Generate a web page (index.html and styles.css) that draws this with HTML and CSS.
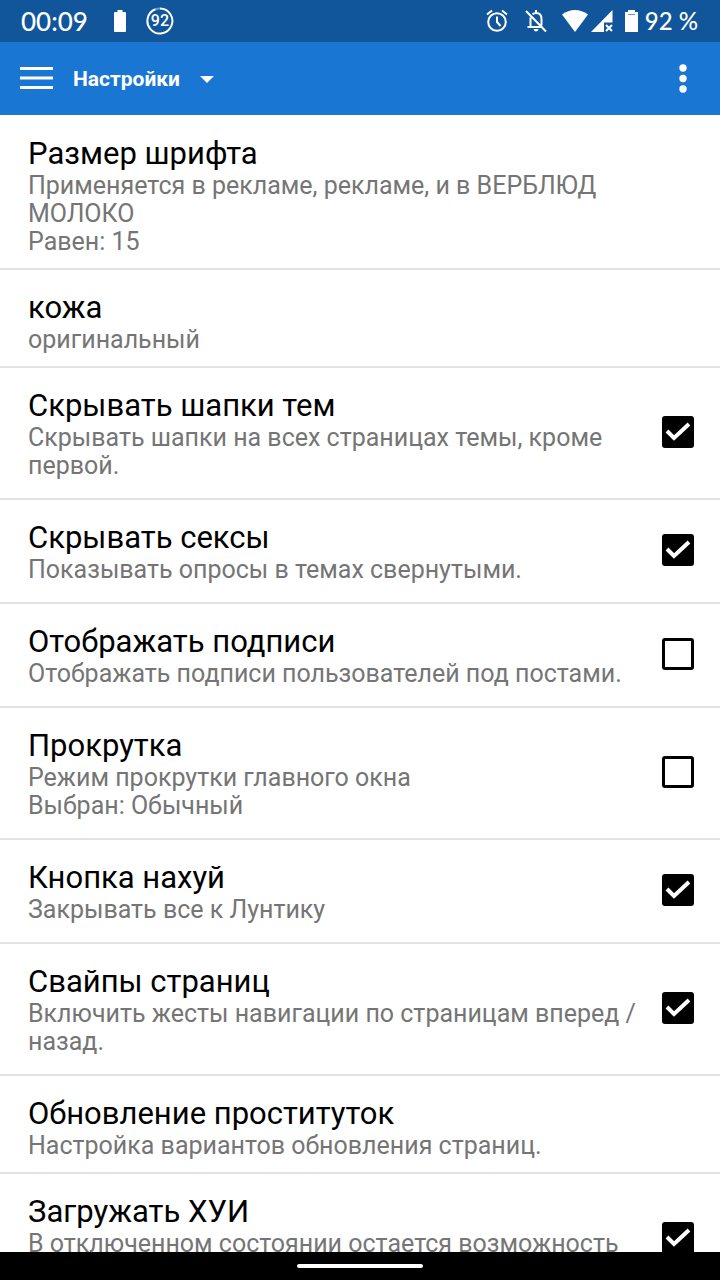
FILE: index.html
```html
<!DOCTYPE html>
<html lang="ru">
<head>
<meta charset="utf-8">
<meta name="viewport" content="width=device-width, initial-scale=1">
<title>Настройки</title>
<link rel="stylesheet" href="styles.css">
</head>
<body>
<div class="screen">
  <div class="status">
    <span class="status-time">00:09</span>
    <svg class="status-battery-note" width="12" height="22" viewBox="0 0 12 22" fill="currentColor"><path d="M3.500 0h5v2H11q1 0 1 1v18q0 1-1 1H1q-1 0-1-1V3q0-1 1-1h2.500z"/></svg>
    <span class="badge">
      <svg class="badge-ring" width="28" height="28" viewBox="0 0 28 28" fill="none" stroke="currentColor" stroke-width="2"><path d="M9.500 2.300A12.500 12.500 0 1 0 14 1.500"/><path d="M14 1.500A12.500 12.500 0 0 0 9.500 2.300" opacity=".4"/></svg>
      <span class="badge-text">92</span>
    </span>
    <span class="status-space"></span>
    <svg class="status-alarm" width="22" height="24" viewBox="0 0 22 24" fill="none" stroke="currentColor" stroke-width="2"><circle cx="11" cy="13" r="8.800"/><path d="M11 7.500V13l3.500 4M1 5.500l5-4M21 5.500l-5-4"/></svg>
    <svg class="status-bell" width="22" height="24" viewBox="0 0 22 24" fill="none" stroke="currentColor" stroke-width="2"><path d="M1 2l20 20.500M7.500 5.300C8.500 4.500 9.500 4 11 4c3.500 0 5.500 2.500 5.500 6v6.500M5.500 8.500V18M2.500 18H16M11 4V1"/><path d="M8.500 20h5q-.5 2.500-2.500 2.500t-2.500-2.500z" fill="currentColor" stroke="none"/></svg>
    <svg class="status-wifi" width="26" height="22" viewBox="0 0 26 22" fill="currentColor"><path d="M0 4.500Q6 0 13 0t13 4.500L13 22z"/></svg>
    <svg class="status-signal" width="22" height="22" viewBox="0 0 22 22"><path d="M21.500 0v12.500H13V22H0z" fill="currentColor"/><path d="M15 15l6 6M21 15l-6 6" stroke="currentColor" stroke-width="2"/></svg>
    <svg class="status-battery" width="13" height="22" viewBox="0 0 13 22" fill="currentColor"><path d="M3 0h7v2h3v20H0V2h3z"/><path d="M3 4.500h7" stroke="#11569b" opacity=".6"/></svg>
    <span class="status-percent">92 %</span>
  </div>

  <header class="appbar">
    <button class="icon-button menu" aria-label="Меню">
      <svg width="34" height="24" viewBox="0 0 34 24" stroke="currentColor" stroke-width="3"><path d="M0 1.500h33M0 11h33M0 20.500h33"/></svg>
    </button>
    <button class="section">Настройки
      <svg width="14" height="8" viewBox="0 0 14 8" fill="currentColor"><path d="M0 1h14L7 8z"/></svg>
    </button>
    <button class="icon-button more" aria-label="Ещё">
      <svg width="8" height="30" viewBox="0 0 8 30" fill="currentColor"><circle cx="4" cy="4" r="3.700"/><circle cx="4" cy="14.500" r="3.700"/><circle cx="4" cy="25" r="3.700"/></svg>
    </button>
  </header>

  <main class="list">
    <button class="row">
      <span class="text"><span class="title">Размер шрифта</span><span class="summary">Применяется в рекламе, рекламе, и в ВЕРБЛЮД МОЛОКО<br>Равен: 15</span></span>
    </button>
    <button class="row">
      <span class="text"><span class="title">кожа</span><span class="summary">оригинальный</span></span>
    </button>
    <label class="row row-check">
      <span class="text"><span class="title">Скрывать шапки тем</span><span class="summary">Скрывать шапки на всех страницах темы, кроме первой.</span></span>
      <span class="check"><input type="checkbox" checked><svg class="tick" viewBox="0 0 32 32"><path d="M5 15l7 7L27 8"/></svg></span>
    </label>
    <label class="row row-check">
      <span class="text"><span class="title">Скрывать сексы</span><span class="summary">Показывать опросы в темах свернутыми.</span></span>
      <span class="check"><input type="checkbox" checked><svg class="tick" viewBox="0 0 32 32"><path d="M5 15l7 7L27 8"/></svg></span>
    </label>
    <label class="row row-check">
      <span class="text"><span class="title">Отображать подписи</span><span class="summary">Отображать подписи пользователей под постами.</span></span>
      <span class="check"><input type="checkbox"><svg class="tick" viewBox="0 0 32 32"><path d="M5 15l7 7L27 8"/></svg></span>
    </label>
    <label class="row row-check">
      <span class="text"><span class="title">Прокрутка</span><span class="summary">Режим прокрутки главного окна<br>Выбран: Обычный</span></span>
      <span class="check"><input type="checkbox"><svg class="tick" viewBox="0 0 32 32"><path d="M5 15l7 7L27 8"/></svg></span>
    </label>
    <label class="row row-check">
      <span class="text"><span class="title">Кнопка нахуй</span><span class="summary">Закрывать все к Лунтику</span></span>
      <span class="check"><input type="checkbox" checked><svg class="tick" viewBox="0 0 32 32"><path d="M5 15l7 7L27 8"/></svg></span>
    </label>
    <label class="row row-check">
      <span class="text"><span class="title">Свайпы страниц</span><span class="summary">Включить жесты навигации по страницам вперед / назад.</span></span>
      <span class="check"><input type="checkbox" checked><svg class="tick" viewBox="0 0 32 32"><path d="M5 15l7 7L27 8"/></svg></span>
    </label>
    <button class="row">
      <span class="text"><span class="title">Обновление проституток</span><span class="summary">Настройка вариантов обновления страниц.</span></span>
    </button>
    <label class="row row-check row-tall">
      <span class="text"><span class="title">Загружать ХУИ</span><span class="summary">В отключенном состоянии остается возможность</span></span>
      <span class="check"><input type="checkbox" checked><svg class="tick" viewBox="0 0 32 32"><path d="M5 15l7 7L27 8"/></svg></span>
    </label>
  </main>

  <div class="navbar"><span class="handle"></span></div>
</div>
</body>
</html>
```
FILE: styles.css
```css
* { box-sizing: border-box; }

body {
  margin: 0;
  background: #fff;
  font-family: Roboto, "Noto Sans", sans-serif;
}

button {
  font: inherit;
  color: inherit;
  background: none;
  border: 0;
  padding: 0;
  cursor: pointer;
}

svg { display: block; flex: none; }

.screen {
  display: flex;
  flex-direction: column;
  height: 100vh;
}

/* Status bar */
.status {
  display: flex;
  flex: none;
  align-items: center;
  height: 42px;
  padding: 0 22px 0 21px;
  background: #11569b;
  color: #fff;
  font-family: Lato, Roboto, sans-serif;
  font-size: 26px;
  font-weight: 500;
  line-height: 42px;
}

.status-battery-note { margin-left: 26px; }

.badge {
  display: grid;
  place-items: center;
  margin-left: 20px;
}

.badge-ring,
.badge-text { grid-area: 1 / 1; }

.badge-text {
  font-family: Roboto, sans-serif;
  font-size: 16px;
  font-weight: 500;
  line-height: 28px;
}

.status-space { flex: 1; }
.status-bell { margin-left: 17px; }
.status-wifi { margin-left: 15px; }
.status-signal { margin-left: 3px; }
.status-battery { margin-left: 12px; }

.status-percent {
  margin-left: 7px;
  font-size: 24px;
}

/* App bar */
.appbar {
  display: flex;
  flex: none;
  align-items: center;
  height: 73px;
  padding: 0 33px 0 20px;
  background: #1976d2;
  color: #fff;
}

.section {
  display: flex;
  align-items: center;
  gap: 20px;
  margin-left: 19px;
  font-size: 21px;
  font-weight: 700;
  line-height: 28px;
}

.more { margin-left: auto; }

/* Preferences */
.list {
  flex: 1;
  min-height: 0;
  padding-top: 1px;
  overflow: hidden;
}

.row {
  display: flex;
  align-items: center;
  width: 100%;
  padding: 16px 28px 12px;
  border-bottom: 2px solid #e2e2e2;
  text-align: left;
  cursor: pointer;
}

.row-check {
  gap: 24px;
  padding: 16px 26px 18px 28px;
}

.row-tall { min-height: 132px; }

.text {
  flex: 1;
  align-self: flex-start;
  min-width: 0;
  padding-top: 4px;
}

.title,
.summary { display: block; }

.title {
  color: #000;
  font-size: 31px;
  line-height: 36px;
}

.summary {
  color: #757575;
  font-size: 25px;
  line-height: 28px;
}

.check {
  display: grid;
  flex: none;
  width: 32px;
  height: 32px;
}

.check input,
.tick { grid-area: 1 / 1; }

.check input {
  appearance: none;
  width: 32px;
  height: 32px;
  margin: 0;
  border: 3px solid #000;
  border-radius: 3px;
  background: #fff;
}

.check input:checked { background: #000; }

.tick {
  z-index: 1;
  width: 32px;
  height: 32px;
  fill: none;
  stroke: #fff;
  stroke-width: 4;
  visibility: hidden;
}

.check input:checked + .tick { visibility: visible; }

/* Gesture bar */
.navbar {
  display: grid;
  flex: none;
  place-items: center;
  height: 28px;
  background: #000;
}

.handle {
  width: 126px;
  height: 4px;
  border-radius: 2px;
  background: #fff;
}
```
